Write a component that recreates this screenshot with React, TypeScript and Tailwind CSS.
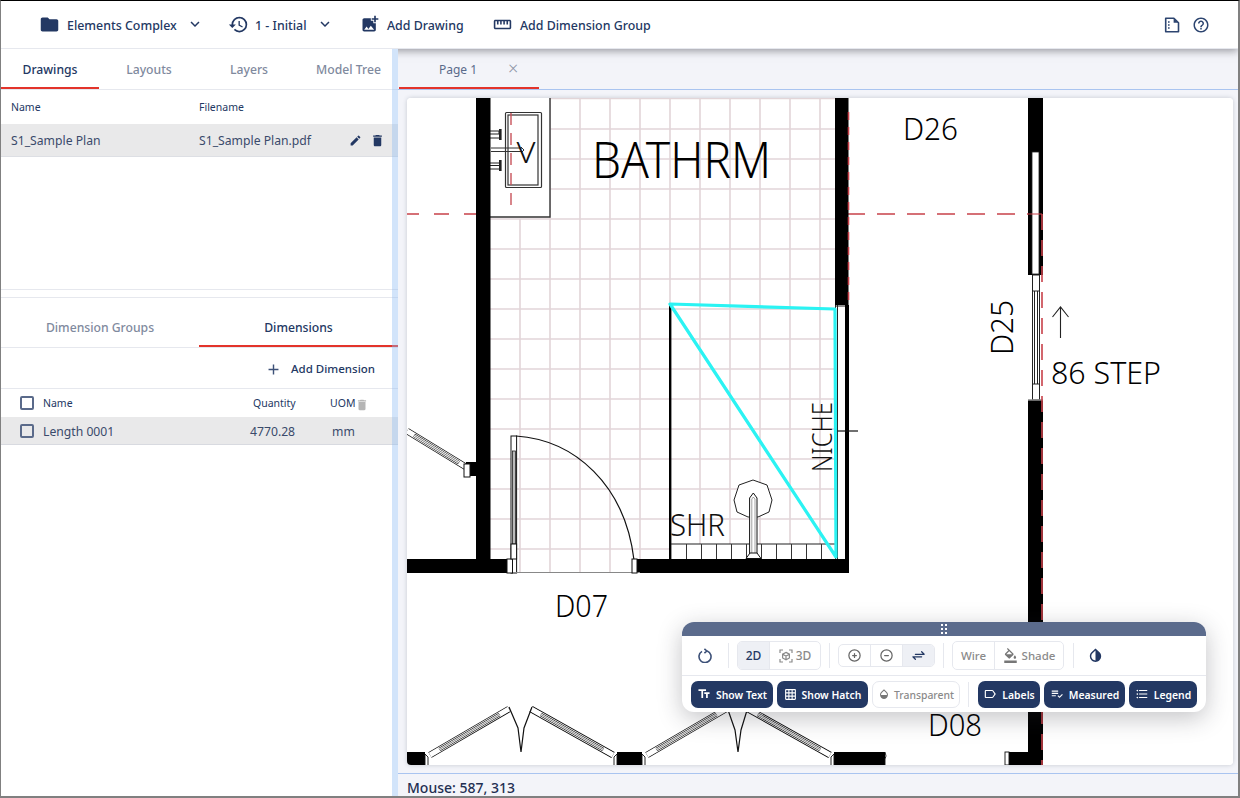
import React from "react";
import {
  MdFolder, MdHistory, MdAddPhotoAlternate, MdKeyboardArrowDown, MdEdit, MdDelete, MdAdd, MdHelpOutline, MdFormatColorFill, MdInvertColors, MdGridOn, MdOutlineLabel, MdFormatListBulleted, MdPlaylistAddCheck, MdOpacity, MdTextFields, MdOutlineStraighten,
} from "react-icons/md";
import { TbCirclePlus, TbCircleMinus, TbArrowsExchange } from "react-icons/tb";

function Head({ icon, label, chevron, cls }: { icon: React.ReactNode; label: string; chevron?: boolean; cls?: string }) {
  return (
    <div className={`flex items-center ${cls ?? ""}`}>
      {icon}
      <span className="text-[12.4px] font-medium text-[#233863] whitespace-nowrap pt-[4px]">{label}</span>
      {chevron && <MdKeyboardArrowDown className="ml-[9px] text-[18px] text-[#233863]" />}
    </div>
  );
}

function Tab({ label, active, cls, pad }: { label: string; active?: boolean; cls?: string; pad: string }) {
  return (
    <div className={`h-full flex items-center justify-center text-[12.2px] font-medium border-b-2 ${pad} ${active ? "text-[#233863] border-[#e3342b]" : "text-[#7f8a9e] border-transparent"} ${cls ?? ""}`}>
      {label}
    </div>
  );
}

function Check() {
  return <div className="w-[14px] h-[14px] rounded-[2px] border-2 border-[#5a6a8a] shrink-0" />;
}

function Solid({ icon, label, cls }: { icon: React.ReactNode; label: string; cls: string }) {
  return (
    <div className={`h-[27px] rounded-[7px] bg-[#233863] text-white flex items-center justify-center gap-[5px] text-[10.4px] font-semibold ${cls}`}>
      {icon}
      <span className="pt-[3px]">{label}</span>
    </div>
  );
}

function Sep({ cls }: { cls: string }) {
  return <div className={`w-px bg-[#e6e8ee] ${cls}`} />;
}

function ResetIcon() {
  return (
    <svg width="14" height="15" viewBox="0 0 14 15" fill="none" stroke="#3d5178" strokeWidth="1.6">
      <path d="M9.2 3A6 6 0 1 1 4 3.4" />
      <path d="M6.4 0.8 8.8 3 6.4 5.2" />
    </svg>
  );
}

function CubeIcon() {
  return (
    <svg width="14" height="14" viewBox="0 0 14 14" fill="none" stroke="#8a8a8a" strokeWidth="1.2">
      <path d="M1 4V1H4M10 1H13V4M13 10V13H10M4 13H1V10" />
      <path d="M7 3.4 10.4 5.2V8.9L7 10.8 3.6 8.9V5.2ZM3.6 5.2 7 7 10.4 5.2M7 7V10.8" />
    </svg>
  );
}

function NoteIcon() {
  return (
    <svg width="16" height="16" viewBox="0 0 16 16" fill="none">
      <path d="M1.7 1.2h8.2l4.6 4.6v9H1.7z" stroke="#2d4570" strokeWidth="1.6" strokeLinejoin="round" />
      <path d="M9.6 1.2v4.6h4.8" fill="#2d4570" />
      <path d="M4 5h2M4 8h2M4 11h2" stroke="#2d4570" strokeWidth="1.4" strokeDasharray="1.6 1" />
    </svg>
  );
}

function Leaf({ x1, y1, x2, y2 }: { x1: number; y1: number; x2: number; y2: number }) {
  const t1 = 0.12, t2 = 0.88;
  const a = [x1 + (x2 - x1) * t1, y1 + (y2 - y1) * t1];
  const b = [x1 + (x2 - x1) * t2, y1 + (y2 - y1) * t2];
  return (
    <g fill="none">
      <line x1={x1} y1={y1} x2={x2} y2={y2} stroke="#000" strokeWidth="6.6" />
      <line x1={x1} y1={y1} x2={x2} y2={y2} stroke="#fff" strokeWidth="5" />
      <line x1={a[0]} y1={a[1]} x2={b[0]} y2={b[1]} stroke="#000" strokeWidth="3.6" />
      <line x1={a[0]} y1={a[1]} x2={b[0]} y2={b[1]} stroke="#fff" strokeWidth="2.5" />
      <line x1={a[0]} y1={a[1]} x2={b[0]} y2={b[1]} stroke="#333" strokeWidth="0.6" />
    </g>
  );
}

function Drawing() {
  const vs = [550, 580, 610, 640, 670, 700, 730, 760, 790, 820];
  const hs = [129, 159, 189, 219, 249, 279, 309, 339, 369, 399, 429, 459, 489, 519, 549];
  const ticks = [686.5, 701.5, 716.5, 731.5, 746.5, 761.5, 776.5, 791.5, 806.5, 821.5];
  const txt = "font-['Noto_Sans',sans-serif] font-light";
  return (
    <svg viewBox="407 98 826 667" className="w-full h-full block">
      <rect x="407" y="98" width="826" height="667" fill="#fff" />
      <g stroke="#e2d5d8" strokeWidth="1.6">
        <line x1="520" y1="219" x2="520" y2="573" />
        {vs.map((x) => <line key={x} x1={x} y1={98} x2={x} y2={x > 640 ? 559 : 573} />)}
        {hs.map((y) => <line key={y} x1={y < 219 ? 550 : 490} y1={y} x2="835" y2={y} />)}
        <line x1="550" y1="98.5" x2="835" y2="98.5" />
      </g>
      <rect x="490" y="98" width="60" height="119" fill="#fff" />
      <rect x="671" y="544" width="164" height="15" fill="#fff" />
      <path d="M490 217H550V98" fill="none" stroke="#333" strokeWidth="1.4" />
      <rect x="505.5" y="112.5" width="36" height="75" rx="1" fill="none" stroke="#333" strokeWidth="1.2" />
      <rect x="508" y="115" width="30" height="70" fill="none" stroke="#333" strokeWidth="1.2" />
      <path d="M490 134h9v-3h-9M490 138h9M490 163h9M490 165.5h9M490 169h9" stroke="#222" strokeWidth="1" fill="none" />
      <rect x="499" y="129" width="2.6" height="11" fill="#222" />
      <rect x="499" y="160" width="2.6" height="11" fill="#222" />
      <path d="M491 148H522M491 151.5H522" stroke="#333" strokeWidth="1" />
      <path d="M521 147l3 3-3 3" stroke="#333" strokeWidth="1" fill="none" />
      <text x="516.5" y="163" className={txt} fontSize="30" fill="#111" textLength="19" lengthAdjust="spacingAndGlyphs">V</text>
      <path d="M511 113V209" stroke="#c8525a" strokeWidth="1.4" strokeDasharray="12 8" />
      <path d="M404 214H477" stroke="#c8414a" strokeWidth="1.3" strokeDasharray="15 15" />
      <path d="M847 214H1028" stroke="#c8414a" strokeWidth="1.3" strokeDasharray="18 12" />
      <g fill="#000">
        <rect x="476" y="98" width="14.5" height="475" />
        <rect x="407" y="559" width="103" height="14" />
        <rect x="636" y="559" width="213" height="14" />
        <rect x="835" y="98" width="13.5" height="207" />
        <rect x="845" y="305" width="4" height="254" />
        <rect x="466" y="462" width="10" height="14" />
        <rect x="669" y="305" width="2.4" height="254" />
      </g>
      <path d="M848.5 112V305" stroke="#c8414a" strokeWidth="1.6" strokeDasharray="8 7" />
      <path d="M835.5 305V559M837.5 305V559" stroke="#222" strokeWidth="1" />
      <path d="M836 306H845" stroke="#222" strokeWidth="1" />
      <path d="M836 431H858" stroke="#111" strokeWidth="1.2" />
      <text transform="translate(832 472)  rotate(-90)" className={txt} fontSize="27" fill="#111" textLength="70" lengthAdjust="spacingAndGlyphs">NICHE</text>
      <path d="M671 544H835" stroke="#222" strokeWidth="1.2" />
      {ticks.map((x) => <line key={x} x1={x} y1="544" x2={x} y2="559" stroke="#333" strokeWidth="1" />)}
      <polygon points="753,480 767,485 772,500 769,512 758,517 748,517 737,512 734,500 739,485" fill="#fff" stroke="#222" strokeWidth="1" />
      <path d="M749.6 555V498L753.3 493 757 498V555" fill="#fff" stroke="#111" strokeWidth="1" />
      <path d="M751.8 555V499L753.3 497 755 499V555" fill="none" stroke="#444" strokeWidth="0.5" />
      <path d="M746 558.5 750 553H757L761 558.5Z" fill="#fff" stroke="#111" strokeWidth="1" />
      <text x="670" y="536" className={txt} fontSize="31" fill="#111" textLength="55" lengthAdjust="spacingAndGlyphs">SHR</text>
      <path d="M670 304 835 309 836 557Z" fill="none" stroke="#2bf3f3" strokeWidth="3.2" strokeLinejoin="round" />
      <text x="592" y="178" className={txt} fontSize="49" fill="#000" textLength="179" lengthAdjust="spacingAndGlyphs">BATHRM</text>
      <text x="903" y="140" className={txt} fontSize="32" fill="#000" textLength="55" lengthAdjust="spacingAndGlyphs">D26</text>
      <text transform="translate(1013 355) rotate(-90)" className={txt} fontSize="32" fill="#000" textLength="55" lengthAdjust="spacingAndGlyphs">D25</text>
      <text x="1051" y="384" className={txt} fontSize="32" fill="#000" textLength="110" lengthAdjust="spacingAndGlyphs">86 STEP</text>
      <text x="555" y="617" className={txt} fontSize="32" fill="#000" textLength="53" lengthAdjust="spacingAndGlyphs">D07</text>
      <text x="928" y="736" className={txt} fontSize="32" fill="#000" textLength="54" lengthAdjust="spacingAndGlyphs">D08</text>
      <path d="M1060.5 338V307M1052.5 317 1060.5 307 1068.5 317" fill="none" stroke="#222" strokeWidth="1.1" />
      <path d="M516 436C575 440 625 485 634 560" fill="none" stroke="#111" strokeWidth="1.2" />
      <rect x="511" y="436" width="5.6" height="137" fill="#fff" stroke="#111" strokeWidth="1" />
      <rect x="512.5" y="451" width="3" height="93" fill="#bbb" stroke="#222" strokeWidth="0.8" />
      <path d="M507 572.5H640" stroke="#888" strokeWidth="1" />
      <rect x="507" y="559" width="5.5" height="14" fill="#fff" stroke="#111" strokeWidth="1" />
      <rect x="632" y="559" width="5" height="14" fill="#fff" stroke="#111" strokeWidth="1" />
      <rect x="511" y="544" width="5.6" height="15" fill="#fff" stroke="#111" strokeWidth="1" />
      <Leaf x1={407} y1={431} x2={466} y2={467} />
      <rect x="464" y="464" width="6" height="13" fill="#fff" stroke="#111" strokeWidth="1" />
      <g fill="#000">
        <rect x="1028" y="98" width="15" height="177" />
        <rect x="1028" y="400" width="15" height="352" />
        <rect x="1007" y="752" width="36" height="13" />
      </g>
      <rect x="1032" y="152" width="7" height="122" fill="#fff" stroke="#222" strokeWidth="0.8" />
      <path d="M1028 214H1042" stroke="#c8414a" strokeWidth="1.2" />
      <rect x="1032.5" y="275" width="7" height="125" fill="#fff" stroke="#222" strokeWidth="1" />
      <path d="M1034.5 291V384M1037.5 291V384M1032.5 291H1039.5M1032.5 384H1039.5" stroke="#222" strokeWidth="1" />
      <path d="M1028 400H1043" stroke="#888" strokeWidth="1.5" />
      <path d="M1042 214V765" stroke="#c8414a" strokeWidth="1.6" strokeDasharray="16 10" />
      <rect x="1005" y="752" width="4" height="13" fill="#fff" stroke="#111" strokeWidth="0.9" />
      <rect x="407" y="752" width="18" height="13" fill="#000" />
      <rect x="617" y="752" width="25" height="13" fill="#000" />
      <rect x="834" y="752" width="51" height="13" fill="#000" />
      <Leaf x1={430} y1={755} x2={509} y2={709} />
      <Leaf x1={531} y1={709} x2={613} y2={755} />
      <Leaf x1={647} y1={755} x2={726} y2={709} />
      <Leaf x1={748} y1={709} x2={830} y2={755} />
      <path d="M509 707 518 728 521 752M532 707 524 728 521 752" fill="none" stroke="#111" strokeWidth="1.2" />
      <path d="M727 707 735 730 738 752M748 707 741 730 738 752" fill="none" stroke="#111" strokeWidth="1.2" />
      <path d="M425 765V754l3 3v8M614 765V757l3-3v11M642 765V754l3 3v8M831 765V757l3-3v11M885 752l1 4-1 3v6" fill="#fff" stroke="#111" strokeWidth="0.9" />
    </svg>
  );
}

export default function App() {
  return (
    <div className="relative w-[1240px] h-[798px] overflow-hidden flex flex-col border-t border-t-black border-l border-l-[#808080] border-r-2 border-r-[#808080] border-b-2 border-b-[#808080] bg-white font-['Noto_Sans',sans-serif] text-[#233863]">
      <header className="relative z-20 h-[48px] shrink-0 flex items-center bg-white border-b border-[#e6e8ee] shadow-[0_2px_8px_rgba(60,60,70,0.5)] pl-[38px] pr-[28px]">
        <Head icon={<MdFolder className="text-[21px] mr-[7px] text-[#233863]" />} label="Elements Complex" chevron cls="w-[189px]" />
        <Head icon={<MdHistory className="text-[21px] mr-[6px] text-[#233863]" />} label="1 - Initial" chevron cls="w-[132px]" />
        <Head icon={<MdAddPhotoAlternate className="text-[20px] mr-[7px] text-[#233863]" />} label="Add Drawing" cls="w-[133px]" />
        <Head icon={<MdOutlineStraighten className="text-[19px] mr-[8px] text-[#233863]" />} label="Add Dimension Group" />
        <div className="ml-auto flex items-center gap-[12px]">
          <NoteIcon />
          <MdHelpOutline className="text-[18px] text-[#2d4570]" />
        </div>
      </header>

      <div className="relative flex-1 flex min-h-0">
        <aside className="relative z-30 w-[397px] shrink-0 flex flex-col bg-white">
          <div className="h-[41px] shrink-0 flex border-b border-[#e6e8ee]">
            <Tab label="Drawings" active pad="pt-[4px]" cls="w-[98px]" />
            <Tab label="Layouts" pad="pt-[4px]" cls="w-[100px]" />
            <Tab label="Layers" pad="pt-[4px]" cls="w-[100px]" />
            <Tab label="Model Tree" pad="pt-[4px]" cls="w-[99px]" />
          </div>
          <div className="h-[34px] shrink-0 flex items-center text-[10.5px] pl-[10px] pt-[2px]">
            <span className="w-[188px]">Name</span>
            <span>Filename</span>
          </div>
          <div className="h-[33px] shrink-0 flex items-center bg-[#e9e9ea] border-b border-[#dddfe4] text-[12.2px] pl-[10px] text-[#3a4a6b]">
            <span className="w-[188px] pt-[3px]">S1_Sample Plan</span>
            <span className="w-[150px] pt-[3px]">S1_Sample Plan.pdf</span>
            <MdEdit className="text-[13px] text-[#233863]" />
            <MdDelete className="text-[15px] ml-[8px] text-[#233863]" />
          </div>
          <div className="h-[133px] shrink-0 border-b border-[#e6e8ee]" />
          <div className="h-[8px] shrink-0 border-b border-[#e6e8ee]" />
          <div className="h-[50px] shrink-0 flex border-b border-[#e6e8ee]">
            <Tab label="Dimension Groups" pad="pt-[13px]" cls="w-[198px]" />
            <Tab label="Dimensions" active pad="pt-[13px]" cls="w-[199px]" />
          </div>
          <div className="h-[41px] shrink-0 flex items-center justify-end pr-[23px] pt-[2px] border-b border-[#e6e8ee] text-[11.5px] font-medium">
            <MdAdd className="text-[17px] mr-[9px] text-[#3d5178]" />
            <span>Add Dimension</span>
          </div>
          <div className="h-[28px] shrink-0 flex items-center pl-[19px] text-[10.5px]">
            <Check />
            <span className="ml-[9px] w-[210px] pt-[2px]">Name</span>
            <span className="w-[77px] pt-[2px]">Quantity</span>
            <span className="pt-[2px]">UOM</span>
            <MdDelete className="text-[14px] text-[#b5b5b5] mt-[3px]" />
          </div>
          <div className="h-[28px] shrink-0 flex items-center pl-[19px] bg-[#e9e9ea] border-b border-[#d8dae0] text-[12.2px] text-[#3a4a6b]">
            <Check />
            <span className="ml-[9px] w-[207px] pt-[4px]">Length 0001</span>
            <span className="w-[82px] pt-[4px]">4770.28</span>
            <span className="pt-[4px]">mm</span>
          </div>
        </aside>

        <div className="absolute z-30 left-[391px] top-0 bottom-0 w-[6px] bg-[#8fbcf2]/40" />

        <main className="flex-1 min-w-0 flex flex-col bg-[#f3f4f9]">
          <div className="h-[41px] shrink-0 flex border-b border-[#a9c4f0] pl-px">
            <div className="w-[140px] h-full border-b-2 border-[#e3342b] relative flex items-center text-[12px] text-[#5a6a8a] pl-[40px] pt-[4px]">
              Page 1
              <span className="absolute left-[109px] top-[10px] text-[18px] leading-none font-light text-[#8c95a6]">×</span>
            </div>
          </div>
          <div className="relative flex-1 min-h-0 pl-[9px] pr-[5px] pt-[8px] pb-[8px]">
            <div className="w-full h-full bg-white rounded-[4px] overflow-hidden shadow-[0_0_4px_rgba(60,70,90,0.25)]">
              <Drawing />
            </div>
            <div className="absolute left-[284px] top-[532px] w-[524px] h-[90px] rounded-[12px] bg-white overflow-hidden shadow-[0_6px_24px_rgba(40,40,50,0.28)] flex flex-col">
              <div className="h-[14px] shrink-0 bg-[#5b6b8c] flex items-center justify-center">
                <svg width="6" height="10" viewBox="0 0 6 10" fill="#fff"><rect x="0" y="0" width="2" height="2" /><rect x="4" y="0" width="2" height="2" /><rect x="0" y="4" width="2" height="2" /><rect x="4" y="4" width="2" height="2" /><rect x="0" y="8" width="2" height="2" /><rect x="4" y="8" width="2" height="2" /></svg>
              </div>
              <div className="h-[40px] shrink-0 flex items-center border-b border-[#e6e8ee] pl-[16px]">
                <ResetIcon />
                <Sep cls="h-[25px] ml-[16px] mr-[8px]" />
                <div className="h-[29px] w-[84px] flex rounded-[5px] border border-[#e6e8ee] overflow-hidden text-[12px] font-medium">
                  <div className="w-[32px] bg-[#eef0f5] border-r border-[#e6e8ee] flex items-center justify-center text-[#233863]">2D</div>
                  <div className="flex-1 flex items-center justify-center gap-[3px] text-[#8a8a8a]"><CubeIcon />3D</div>
                </div>
                <Sep cls="h-[25px] ml-[8px] mr-[8px]" />
                <div className="h-[23px] w-[97px] flex rounded-[5px] border border-[#e6e8ee] overflow-hidden">
                  <div className="w-[32px] border-r border-[#e6e8ee] flex items-center justify-center text-[#666]"><TbCirclePlus className="text-[15px]" /></div>
                  <div className="w-[32px] border-r border-[#e6e8ee] flex items-center justify-center text-[#666]"><TbCircleMinus className="text-[15px]" /></div>
                  <div className="flex-1 bg-[#eef0f5] flex items-center justify-center text-[#233863]"><TbArrowsExchange className="text-[15px]" /></div>
                </div>
                <Sep cls="h-[25px] ml-[8px] mr-[8px]" />
                <div className="h-[29px] w-[112px] flex rounded-[5px] border border-[#e6e8ee] overflow-hidden text-[11.5px] font-medium text-[#8a8a8a]">
                  <div className="w-[42px] border-r border-[#e6e8ee] flex items-center justify-center">Wire</div>
                  <div className="flex-1 flex items-center justify-center gap-[4px]"><MdFormatColorFill className="text-[15px] text-[#777]" />Shade</div>
                </div>
                <Sep cls="h-[25px] ml-[9px] mr-[13px]" />
                <MdInvertColors className="text-[17px] text-[#233863]" />
              </div>
              <div className="flex-1 flex items-center pl-[9px] gap-[4px]">
                <Solid icon={<MdTextFields className="text-[14px]" />} label="Show Text" cls="w-[82px]" />
                <Solid icon={<MdGridOn className="text-[13px]" />} label="Show Hatch" cls="w-[91px]" />
                <div className="h-[27px] w-[88px] rounded-[7px] border border-[#e6e8ee] flex items-center justify-center gap-[4px] text-[10.4px] font-medium text-[#8a8a8a]">
                  <MdOpacity className="text-[12px] text-[#777]" /><span className="pt-[3px]">Transparent</span>
                </div>
                <Sep cls="h-[25px] ml-[4px] mr-[5px]" />
                <Solid icon={<MdOutlineLabel className="text-[14px]" />} label="Labels" cls="w-[62px]" />
                <Solid icon={<MdPlaylistAddCheck className="text-[14px]" />} label="Measured" cls="w-[81px]" />
                <Solid icon={<MdFormatListBulleted className="text-[14px]" />} label="Legend" cls="w-[68px]" />
              </div>
            </div>
          </div>
          <div className="h-[23px] shrink-0 border-t border-[#a9c4f0] flex items-center pl-[9px] pt-[5px] text-[14px] font-medium text-[#1f2f52]">
            Mouse: 587, 313
          </div>
        </main>
      </div>
    </div>
  );
}
